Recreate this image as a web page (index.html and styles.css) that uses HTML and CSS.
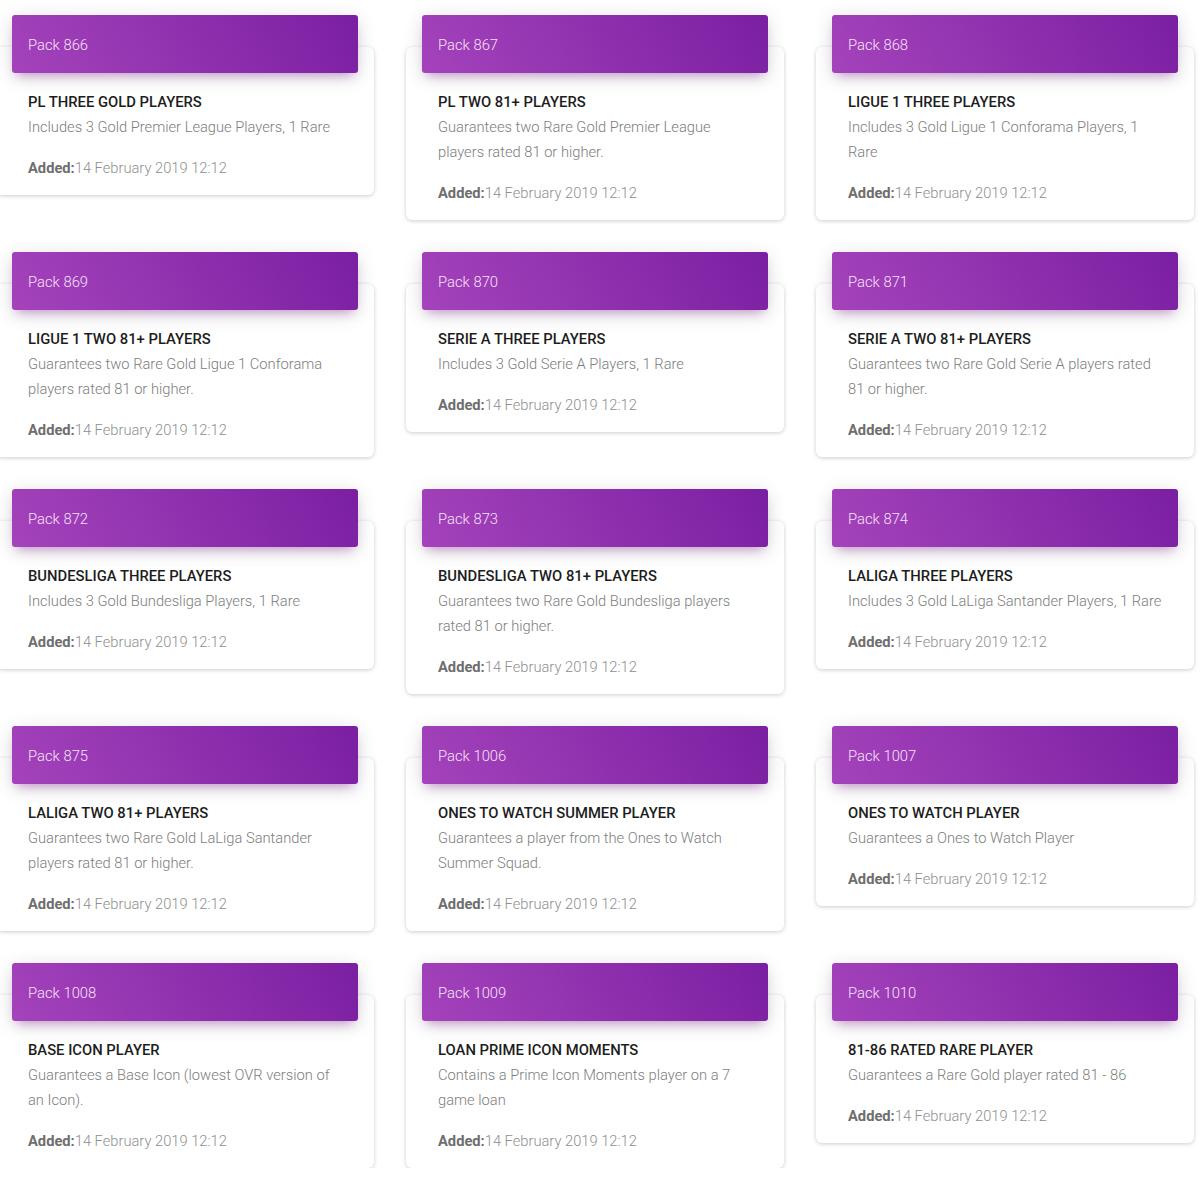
FILE: index.html
```html
<!DOCTYPE html>
<html>
<head>
<meta charset="utf-8">
<link rel="stylesheet" href="styles.css">
</head>
<body>
<div class="grid">
  <div class="card"><div class="card-header">Pack 866</div><div class="card-body"><h4 class="title">PL THREE GOLD PLAYERS</h4><p class="desc">Includes 3 Gold Premier League Players, 1 Rare</p><p class="added"><b>Added:</b>14 February 2019 12:12</p></div></div>
  <div class="card"><div class="card-header">Pack 867</div><div class="card-body"><h4 class="title">PL TWO 81+ PLAYERS</h4><p class="desc">Guarantees two Rare Gold Premier League players rated 81 or higher.</p><p class="added"><b>Added:</b>14 February 2019 12:12</p></div></div>
  <div class="card"><div class="card-header">Pack 868</div><div class="card-body"><h4 class="title">LIGUE 1 THREE PLAYERS</h4><p class="desc">Includes 3 Gold Ligue 1 Conforama Players, 1 Rare</p><p class="added"><b>Added:</b>14 February 2019 12:12</p></div></div>

  <div class="card"><div class="card-header">Pack 869</div><div class="card-body"><h4 class="title">LIGUE 1 TWO 81+ PLAYERS</h4><p class="desc">Guarantees two Rare Gold Ligue 1 Conforama players rated 81 or higher.</p><p class="added"><b>Added:</b>14 February 2019 12:12</p></div></div>
  <div class="card"><div class="card-header">Pack 870</div><div class="card-body"><h4 class="title">SERIE A THREE PLAYERS</h4><p class="desc">Includes 3 Gold Serie A Players, 1 Rare</p><p class="added"><b>Added:</b>14 February 2019 12:12</p></div></div>
  <div class="card"><div class="card-header">Pack 871</div><div class="card-body"><h4 class="title">SERIE A TWO 81+ PLAYERS</h4><p class="desc">Guarantees two Rare Gold Serie A players rated 81 or higher.</p><p class="added"><b>Added:</b>14 February 2019 12:12</p></div></div>

  <div class="card"><div class="card-header">Pack 872</div><div class="card-body"><h4 class="title">BUNDESLIGA THREE PLAYERS</h4><p class="desc">Includes 3 Gold Bundesliga Players, 1 Rare</p><p class="added"><b>Added:</b>14 February 2019 12:12</p></div></div>
  <div class="card"><div class="card-header">Pack 873</div><div class="card-body"><h4 class="title">BUNDESLIGA TWO 81+ PLAYERS</h4><p class="desc">Guarantees two Rare Gold Bundesliga players rated 81 or higher.</p><p class="added"><b>Added:</b>14 February 2019 12:12</p></div></div>
  <div class="card"><div class="card-header">Pack 874</div><div class="card-body"><h4 class="title">LALIGA THREE PLAYERS</h4><p class="desc">Includes 3 Gold LaLiga Santander Players, 1 Rare</p><p class="added"><b>Added:</b>14 February 2019 12:12</p></div></div>

  <div class="card"><div class="card-header">Pack 875</div><div class="card-body"><h4 class="title">LALIGA TWO 81+ PLAYERS</h4><p class="desc">Guarantees two Rare Gold LaLiga Santander players rated 81 or higher.</p><p class="added"><b>Added:</b>14 February 2019 12:12</p></div></div>
  <div class="card"><div class="card-header">Pack 1006</div><div class="card-body"><h4 class="title">ONES TO WATCH SUMMER PLAYER</h4><p class="desc">Guarantees a player from the Ones to Watch Summer Squad.</p><p class="added"><b>Added:</b>14 February 2019 12:12</p></div></div>
  <div class="card"><div class="card-header">Pack 1007</div><div class="card-body"><h4 class="title">ONES TO WATCH PLAYER</h4><p class="desc">Guarantees a Ones to Watch Player</p><p class="added"><b>Added:</b>14 February 2019 12:12</p></div></div>

  <div class="card"><div class="card-header">Pack 1008</div><div class="card-body"><h4 class="title">BASE ICON PLAYER</h4><p class="desc">Guarantees a Base Icon (lowest OVR version of an Icon).</p><p class="added"><b>Added:</b>14 February 2019 12:12</p></div></div>
  <div class="card"><div class="card-header">Pack 1009</div><div class="card-body"><h4 class="title">LOAN PRIME ICON MOMENTS</h4><p class="desc">Contains a Prime Icon Moments player on a 7 game loan</p><p class="added"><b>Added:</b>14 February 2019 12:12</p></div></div>
  <div class="card"><div class="card-header">Pack 1010</div><div class="card-body"><h4 class="title">81-86 RATED RARE PLAYER</h4><p class="desc">Guarantees a Rare Gold player rated 81 - 86</p><p class="added"><b>Added:</b>14 February 2019 12:12</p></div></div>
</div>
</body>
</html>
```
FILE: styles.css
```css
html, body {
  margin: 0;
  padding: 0;
  background: #fff;
  font-family: Roboto, "Noto Sans", sans-serif;
}

.grid {
  display: grid;
  grid-template-columns: repeat(3, 378px);
  column-gap: 32px;
  row-gap: 32px;
  align-items: start;
  margin-left: -4px;
  padding-top: 15px;
}

.card {
  margin-top: 32px;
  background: #fff;
  border-radius: 6px;
  box-shadow: 0 1px 4px 0 rgba(0, 0, 0, 0.2);
  padding: 0 16px;
}

.card-header {
  margin-top: -32px;
  height: 58px;
  box-sizing: border-box;
  padding: 1px 16px 0;
  display: flex;
  align-items: center;
  border-radius: 3px;
  background: linear-gradient(60deg, #a443bb, #7b1fa2);
  color: #f6e3f8;
  font-size: 14.8px;
  font-weight: 300;
  box-shadow: 0 4px 20px 0 rgba(0, 0, 0, 0.14), 0 7px 10px -5px rgba(156, 39, 176, 0.4);
}

.card-body {
  padding: 17px 14px 14px 16px;
}

.title {
  margin: 0;
  font-size: 14.8px;
  line-height: 25px;
  font-weight: 500;
  color: #1d1d1d;
}

.desc {
  margin: 0 0 16px;
  font-size: 14.7px;
  line-height: 25px;
  font-weight: 300;
  color: #7d7d7d;
}

.added {
  margin: 0;
  font-size: 14.7px;
  line-height: 25px;
  font-weight: 300;
  color: #8f8f8f;
}

.added b {
  font-weight: 700;
  color: #6e6e6e;
}
```
